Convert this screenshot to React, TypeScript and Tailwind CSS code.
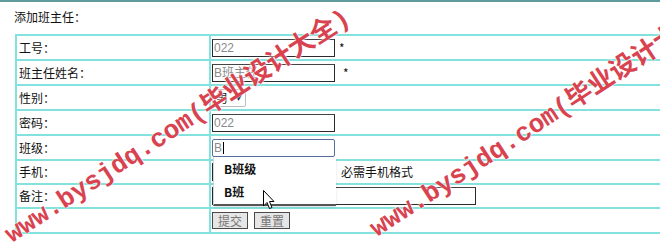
import React from 'react';

const cjk = { fontFamily: '"Noto Sans CJK SC", "Noto Sans", sans-serif' };

const Row: React.FC<{ label: string; h: string; children?: React.ReactNode }> = ({ label, h, children }) => (
    <div className={`flex ${h} border-b-2 border-[#84e2de]`}>
        <div className="w-[194px] shrink-0 border-r-2 border-[#84e2de] flex items-center pl-[2px] text-[12px] text-[#111]">
            {label}
        </div>
        <div className="flex items-center pl-[1px] text-[12px] text-[#111]">{children}</div>
    </div>
);

const TextBox: React.FC<{ value?: string; w?: string; focus?: boolean }> = ({ value = '', w = 'w-[123px]', focus }) => (
    <div
        className={`${w} h-[18px] flex items-center pl-[1px] text-[12px] text-[#8a8a8a] leading-none border ${
            focus ? 'border-[#56709a] rounded-[2px]' : 'border-[#2b2b2b] border-t-[#444]'
        } bg-white`}
        style={{ fontFamily: '"Liberation Sans", "Noto Sans CJK SC", sans-serif' }}
    >
        {value}
        {focus && <span className="ml-[1px] w-px h-[12px] bg-black" />}
    </div>
);

const Button: React.FC<{ label: string }> = ({ label }) => (
    <div className="w-[36px] h-[17px] flex items-center justify-center border border-[#4a4a4a] bg-[#e6e6e6] text-[12px] text-[#777] leading-none">
        {label}
    </div>
);

const Watermark: React.FC<{ text: string; left: string; top: string }> = ({ text, left, top }) => (
    <span
        className={`absolute ${left} ${top} origin-bottom-left rotate-[-33deg] whitespace-nowrap text-[26px] leading-none font-bold text-[#d9424f] pointer-events-none`}
        style={{
            fontFamily: '"Liberation Mono", "Noto Sans CJK SC", monospace',
            textShadow: '0 0 2px #fff, 0 0 2px #fff',
        }}
    >
        {text}
    </span>
);

export default function App() {
    return (
        <div className="relative w-[660px] h-[249px] overflow-hidden bg-white border-t-2 border-[#5f9c9c]" style={cjk}>
            <div className="h-[32px] pl-[14px] pt-[6px] text-[12px] text-[#111]">添加班主任：</div>

            <div className="ml-[15px] w-[700px] border-l-2 border-t-2 border-[#84e2de]">
                <Row label="工号：" h="h-[25px]">
                    <TextBox value="022" />
                    <span className="ml-[4px]">*</span>
                </Row>
                <Row label="班主任姓名：" h="h-[25px]">
                    <TextBox value="B班主任" />
                    <span className="ml-[8px]">*</span>
                </Row>
                <Row label="性别：" h="h-[25px]">
                    <div className="w-[34px] h-[18px] flex items-center justify-between px-[3px] border border-[#bdbdbd] rounded-[2px] bg-white">
                        <span className="text-[12px] leading-none">男</span>
                        <span className="text-[7px] leading-none">▼</span>
                    </div>
                </Row>
                <Row label="密码：" h="h-[25px]">
                    <TextBox value="022" />
                </Row>
                <Row label="班级：" h="h-[25px]">
                    <TextBox value="B" focus />
                </Row>
                <Row label="手机：" h="h-[24px]">
                    <TextBox />
                    <span className="ml-[6px]">必需手机格式</span>
                </Row>
                <Row label="备注：" h="h-[24px]">
                    <TextBox w="w-[264px]" />
                </Row>
                <Row label="" h="h-[25px]">
                    <div className="flex gap-[6px]">
                        <Button label="提交" />
                        <Button label="重置" />
                    </div>
                </Row>
            </div>

            {/* autocomplete list */}
            <div className="absolute left-[213px] top-[155px] w-[123px] h-[49px] bg-white border-l border-[#d8d8d8] border-b-2 border-b-[#555] shadow-sm flex flex-col justify-around pl-[10px] text-[12px] font-bold text-[#111]">
                <div>B班级</div>
                <div>B班</div>
            </div>

            {/* mouse cursor */}
            <svg className="absolute left-[263px] top-[188px]" width="12" height="20" viewBox="0 0 12 20">
                <path d="M0.5 0.5 L0.5 16 L4 12.5 L6.5 18.5 L9 17.5 L6.5 11.5 L11 11.5 Z" fill="#fff" stroke="#000" strokeWidth="1" />
            </svg>

            <Watermark text="www.bysjdq.com(毕业设计大全)" left="left-[15px]" top="top-[220px]" />
            <Watermark text="www.bysjdq.com(毕业设计大全)" left="left-[380px]" top="top-[214px]" />
        </div>
    );
}
